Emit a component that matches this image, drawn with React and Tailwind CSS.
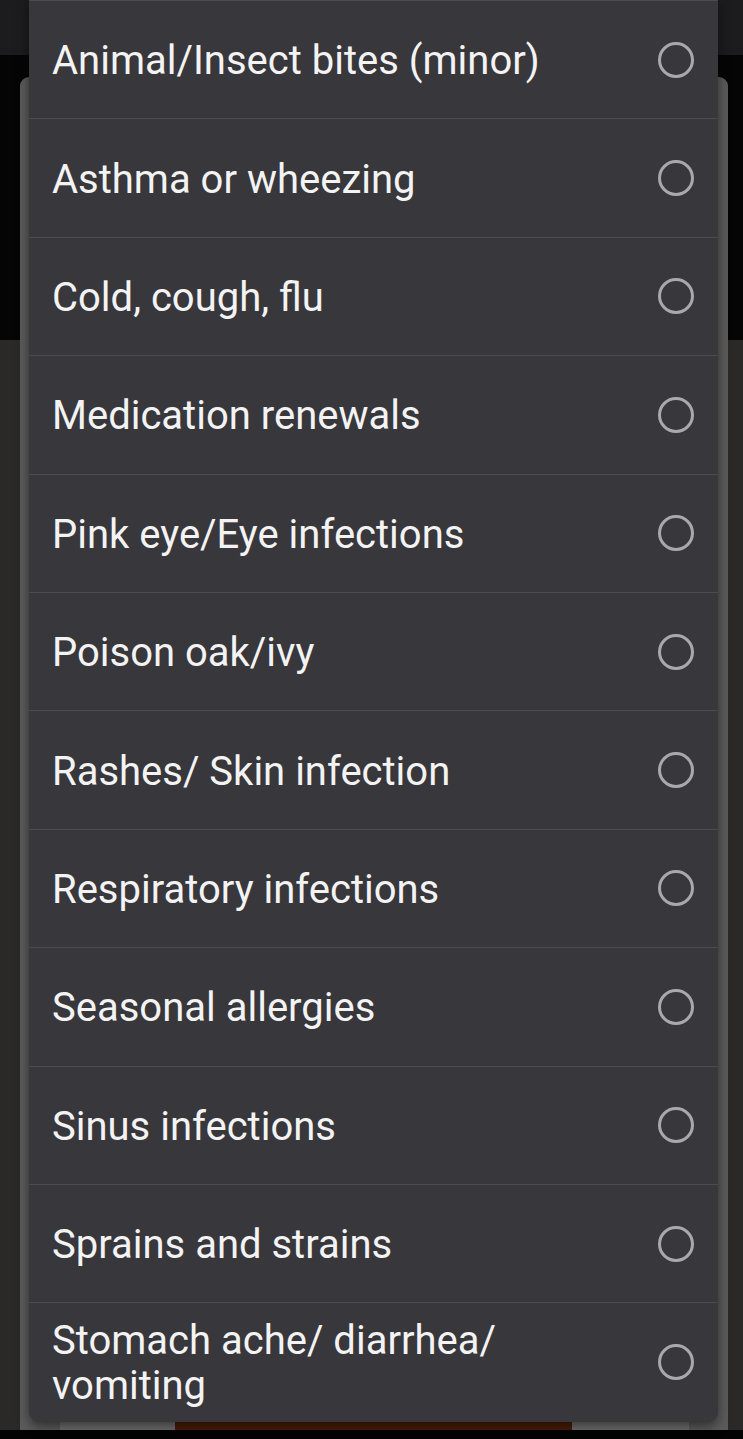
const items = [
  'Animal/Insect bites (minor)',
  'Asthma or wheezing',
  'Cold, cough, flu',
  'Medication renewals',
  'Pink eye/Eye infections',
  'Poison oak/ivy',
  'Rashes/ Skin infection',
  'Respiratory infections',
  'Seasonal allergies',
  'Sinus infections',
  'Sprains and strains',
  'Stomach ache/ diarrhea/ vomiting',
];

function Radio() {
  return (
    <svg width="38" height="38" viewBox="0 0 38 38" className="shrink-0">
      <circle cx="19" cy="19" r="16.5" fill="none" stroke="#a9a8ac" strokeWidth="3" />
    </svg>
  );
}

export default function App() {
  return (
    <div className="relative h-[1439px] w-[743px] overflow-hidden bg-[#050505]" style={{ fontFamily: 'Roboto, "Noto Sans", sans-serif' }}>
      {/* dimmed page behind */}
      <div className="flex h-full flex-col">
        <div className="h-[55px] bg-[#1c1c1e]" />
        <div className="h-[285px] bg-[#050505]" />
        <div className="flex-1 bg-[#2b2927]" />
        <div className="h-[9px] bg-[#030303]" />
      </div>

      {/* underlying sheet */}
      <div className="absolute left-[20px] top-[77px] flex h-[1353px] w-[708px] flex-col justify-end rounded-t-[9px] bg-[#5b5b5b]">
        <div className="flex h-[10px] items-stretch">
          <div className="w-[40px]" />
          <div className="w-[115px] bg-[#6e6e6e]" />
          <div className="w-[397px] bg-[#4a1c06]" />
          <div className="w-[117px] bg-[#6e6e6e]" />
        </div>
      </div>

      {/* dropdown menu */}
      <div className="absolute left-[29px] top-0 w-[689px] overflow-hidden rounded-b-[10px] border-t border-[#4b4a4f] bg-[#38373c] shadow-[0_4px_12px_rgba(0,0,0,0.5)]">
        {items.map((label, i) => (
          <div
            key={label}
            className={`flex h-[118.4px] items-center justify-between pl-[23px] pr-[23px] ${i < items.length - 1 ? 'border-b border-[#4b4a4f]' : ''}`}
          >
            <span className="max-w-[580px] pt-[2px] text-[40px] leading-[45px] text-[#f3f3f3]">{label}</span>
            <Radio />
          </div>
        ))}
      </div>
    </div>
  );
}
